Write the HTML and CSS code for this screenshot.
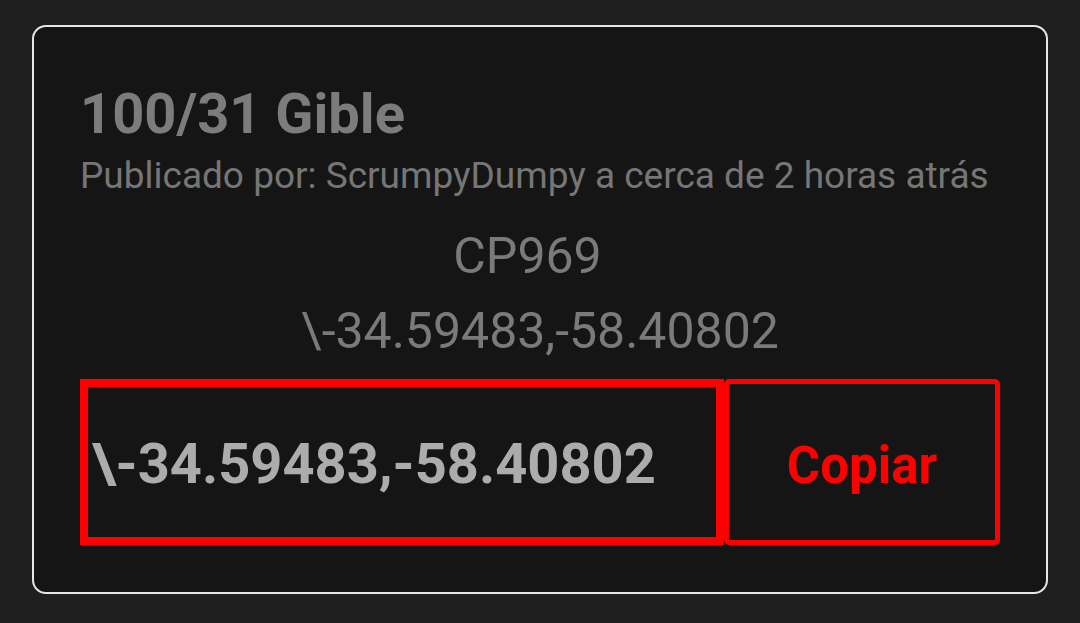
FILE: index.html
```html
<!DOCTYPE html>
<html lang="es">
<head>
<meta charset="utf-8">
<link rel="stylesheet" href="styles.css">
</head>
<body>
<div class="card">
  <div class="title">100/31 Gible</div>
  <div class="meta">Publicado por: ScrumpyDumpy a cerca de 2 horas atrás</div>
  <div class="code">CP969</div>
  <div class="coords">\-34.59483,-58.40802</div>
  <div class="row">
    <div class="field">\-34.59483,-58.40802</div>
    <div class="copy">Copiar</div>
  </div>
</div>
</body>
</html>
```

FILE: styles.css
```css
html, body {
  margin: 0;
  padding: 0;
  background: #1f1f1f;
  font-family: Roboto, "Liberation Sans", sans-serif;
}
.card {
  box-sizing: border-box;
  margin: 25px 32px 0 32px;
  height: 569px;
  border: 2.5px solid #e6e6e6;
  border-radius: 14px;
  background: #151515;
  padding: 54px 46px 0 46px;
  display: flex;
  flex-direction: column;
}
.title {
  font-size: 56px;
  line-height: 66px;
  font-weight: 700;
  color: #7c7c7c;
}
.meta {
  margin-top: 7px;
  font-size: 37px;
  line-height: 43px;
  color: #767676;
  white-space: nowrap;
}
.code {
  margin-top: 30px;
  padding-right: 25px;
  font-size: 50px;
  line-height: 58px;
  color: #7a7a7a;
  text-align: center;
}
.coords {
  margin-top: 17px;
  font-size: 50px;
  line-height: 58px;
  color: #7a7a7a;
  text-align: center;
}
.row {
  margin-top: 19px;
  display: flex;
  height: 166px;
}
.field {
  box-sizing: border-box;
  flex: 0 0 644px;
  border: 8px solid #ff0000;
  padding-left: 4px;
  padding-top: 3px;
  display: flex;
  align-items: center;
  font-size: 56px;
  font-weight: 700;
  color: #acacac;
  white-space: nowrap;
  overflow: hidden;
}
.copy {
  box-sizing: border-box;
  flex: 1;
  border: 5px solid #ff0000;
  border-radius: 5px;
  padding-top: 6px;
  display: flex;
  align-items: center;
  justify-content: center;
  font-size: 51px;
  font-weight: 700;
  color: #ff0000;
}
```
